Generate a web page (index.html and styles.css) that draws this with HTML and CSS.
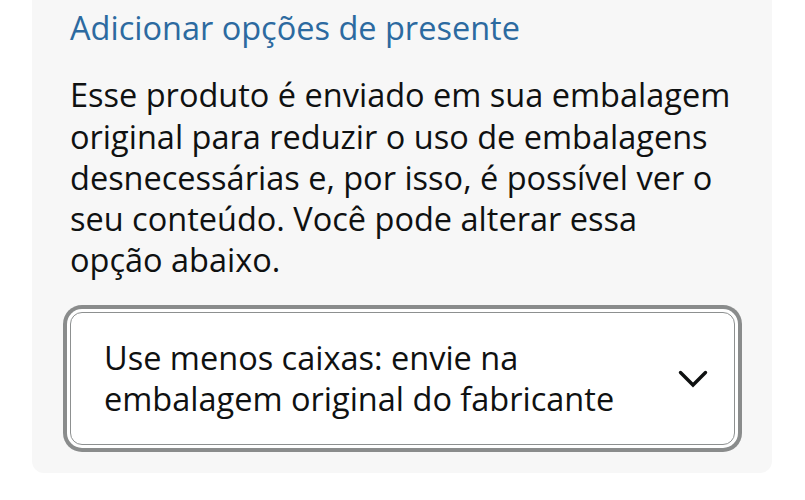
FILE: index.html
```html
<!DOCTYPE html>
<html lang="pt-BR">
<head>
<meta charset="utf-8">
<link rel="stylesheet" href="styles.css">
</head>
<body>
<section class="panel">
  <h2 class="gift-title">Adicionar opções de presente</h2>
  <p class="info">Esse produto é enviado em sua embalagem<br>original para reduzir o uso de embalagens<br>desnecessárias e, por isso, é possível ver o<br>seu conteúdo. Você pode alterar essa<br>opção abaixo.</p>
  <div class="select">
    <span class="select-text">Use menos caixas: envie na embalagem original do fabricante</span>
    <svg class="chevron" width="30" height="18" viewBox="0 0 30 18" aria-hidden="true">
      <path d="M2.5 2.5 L15 15 L27.5 2.5" fill="none" stroke="#0f1111" stroke-width="3.4" stroke-linecap="round" stroke-linejoin="miter"/>
    </svg>
  </div>
</section>
</body>
</html>
```
FILE: styles.css
```css
html, body {
  margin: 0;
  padding: 0;
  background: #ffffff;
}
body {
  font-family: "Open Sans", "Noto Sans", sans-serif;
  color: #0f1111;
}
.panel {
  margin-left: 32px;
  width: 740px;
  box-sizing: border-box;
  background: #f7f7f7;
  border-radius: 0 0 12px 12px;
  padding: 6.8px 37px 28px 38px;
}
.gift-title {
  margin: 0;
  font-size: 32.5px;
  line-height: 41.25px;
  font-weight: 400;
  color: #2c6aa0;
}
.info {
  margin: 26.45px 0 0 0;
  font-size: 32.5px;
  line-height: 41.25px;
  white-space: nowrap;
}
.select {
  margin-top: 31.25px;
  display: flex;
  align-items: center;
  gap: 20px;
  background: #ffffff;
  border: 1px solid #8d9090;
  border-radius: 12px;
  box-shadow: 0 0 0 3px #ffffff, 0 0 0 7px #8a8c8c;
  padding: 23.8px 26px 24.7px 33px;
}
.select-text {
  flex: 1;
  font-size: 32.5px;
  line-height: 41.25px;
}
.chevron {
  flex: none;
  display: block;
  margin-top: 2px;
}
```
